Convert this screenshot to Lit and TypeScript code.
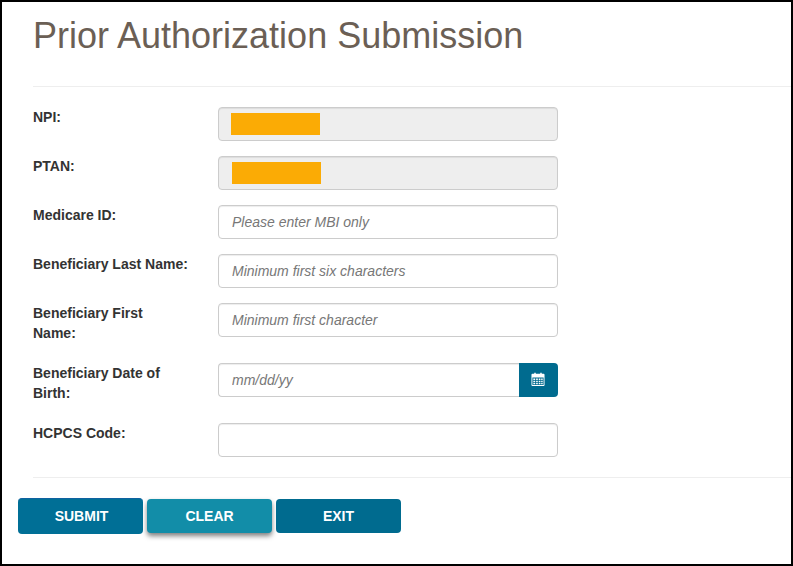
import { LitElement, html, css } from 'lit';
import { customElement } from 'lit/decorators.js';

type Field = {
  label: string;
  placeholder?: string;
  redact?: number; // left offset of the masked value, disabled field
  date?: boolean;
};

const FIELDS: Field[] = [
  { label: 'NPI:', redact: 12 },
  { label: 'PTAN:', redact: 13 },
  { label: 'Medicare ID:', placeholder: 'Please enter MBI only' },
  { label: 'Beneficiary Last Name:', placeholder: 'Minimum first six characters' },
  { label: 'Beneficiary First Name:', placeholder: 'Minimum first character' },
  { label: 'Beneficiary Date of Birth:', placeholder: 'mm/dd/yy', date: true },
  { label: 'HCPCS Code:' },
];

@customElement('app-root')
export class AppRoot extends LitElement {
  static styles = css`
    :host {
      display: block;
      font-family: 'Liberation Sans', Arial, sans-serif;
      color: #333;
    }
    .frame {
      box-sizing: border-box;
      width: 793px;
      height: 566px;
      border: 2px solid #000;
      background: #fff;
      overflow: hidden;
    }
    .content {
      padding-left: 31px;
    }
    h1 {
      margin: 0;
      padding-top: 14px;
      font-size: 36px;
      font-weight: 400;
      line-height: 40px;
      color: #6b5f55;
    }
    hr {
      margin: 0;
      border: 0;
      border-top: 1px solid #eee;
    }
    .title-rule {
      margin-top: 30px;
    }
    .form {
      display: grid;
      grid-template-columns: 155px 340px;
      column-gap: 30px;
      row-gap: 15px;
      padding: 20px 0;
    }
    label {
      display: block;
      margin-bottom: 5px;
      font-size: 14px;
      font-weight: 700;
      line-height: 20px;
    }
    .control {
      position: relative;
      display: flex;
      height: 34px;
    }
    input {
      box-sizing: border-box;
      flex: 1;
      min-width: 0;
      height: 34px;
      padding: 6px 13px;
      border: 1px solid #ccc;
      border-radius: 4px;
      background: #fff;
      font: italic 14px 'Liberation Sans', Arial, sans-serif;
      color: #555;
      box-shadow: inset 0 1px 1px rgba(0, 0, 0, 0.075);
    }
    input::placeholder {
      color: #777;
      opacity: 1;
    }
    input:disabled {
      background: #eee;
    }
    .date input {
      border-right: 0;
      border-radius: 4px 0 0 4px;
    }
    .calendar {
      display: flex;
      align-items: center;
      justify-content: center;
      width: 39px;
      border: 0;
      padding: 0 2px 2px 0;
      border-radius: 0 4px 4px 0;
      background: #006b8f;
    }
    .redact {
      position: absolute;
      top: 6px;
      width: 89px;
      height: 22px;
      background: #fbab05;
    }
    .actions {
      display: flex;
      align-items: center;
      gap: 4px;
      margin-left: -15px;
      margin-top: 20px;
    }
    .btn {
      box-sizing: border-box;
      width: 125px;
      height: 34px;
      border: 0;
      border-radius: 4px;
      background: #006b8f;
      color: #fff;
      font: 700 14px 'Liberation Sans', Arial, sans-serif;
    }
    .submit {
      height: 36px;
      padding: 0 4px 2px 6px;
      background: #006f96;
      border-top: 1px solid #0f62a0;
    }
    .clear {
      background: #128da8;
      box-shadow: 0 3px 5px rgba(0, 0, 0, 0.5);
    }
  `;

  renderControl(f: Field) {
    if (f.date) {
      return html`<div class="control date">
        <input type="text" placeholder=${f.placeholder} />
        <button class="calendar" aria-label="Open calendar">
          <svg width="14" height="14" viewBox="0 0 14 15">
            <path
              fill="#fff"
              fill-rule="evenodd"
              d="M1 2h2V.8h1.6V2h4.8V.8H11V2h2a1 1 0 0 1 1 1v11a1 1 0 0 1-1 1H1a1 1 0 0 1-1-1V3a1 1 0 0 1 1-1zM1 6v8h12V6zM2 7h2v1.6H2zM5 7h1.8v1.6H5zM7.8 7H9.6v1.6H7.8zM10.4 7H12v1.6h-1.6zM2 9.4h2V11H2zM5 9.4h1.8V11H5zM7.8 9.4h1.8V11H7.8zM10.4 9.4H12V11h-1.6zM2 11.8h2v1.4H2zM5 11.8h1.8v1.4H5zM7.8 11.8h1.8v1.4H7.8zM10.4 11.8H12v1.4h-1.6z"
            />
          </svg>
        </button>
      </div>`;
    }
    return html`<div class="control">
      <input type="text" placeholder=${f.placeholder ?? ''} ?disabled=${f.redact !== undefined} />
      ${f.redact !== undefined
        ? html`<span class="redact" style="left:${f.redact + 1}px"></span>`
        : ''}
    </div>`;
  }

  render() {
    return html`
      <div class="frame">
        <div class="content">
          <h1>Prior Authorization Submission</h1>
          <hr class="title-rule" />
          <div class="form">
            ${FIELDS.map(
              (f) => html`<label>${f.label}</label>${this.renderControl(f)}`,
            )}
          </div>
          <hr />
          <div class="actions">
            <button class="btn submit">SUBMIT</button>
            <button class="btn clear">CLEAR</button>
            <button class="btn exit">EXIT</button>
          </div>
        </div>
      </div>
    `;
  }
}
